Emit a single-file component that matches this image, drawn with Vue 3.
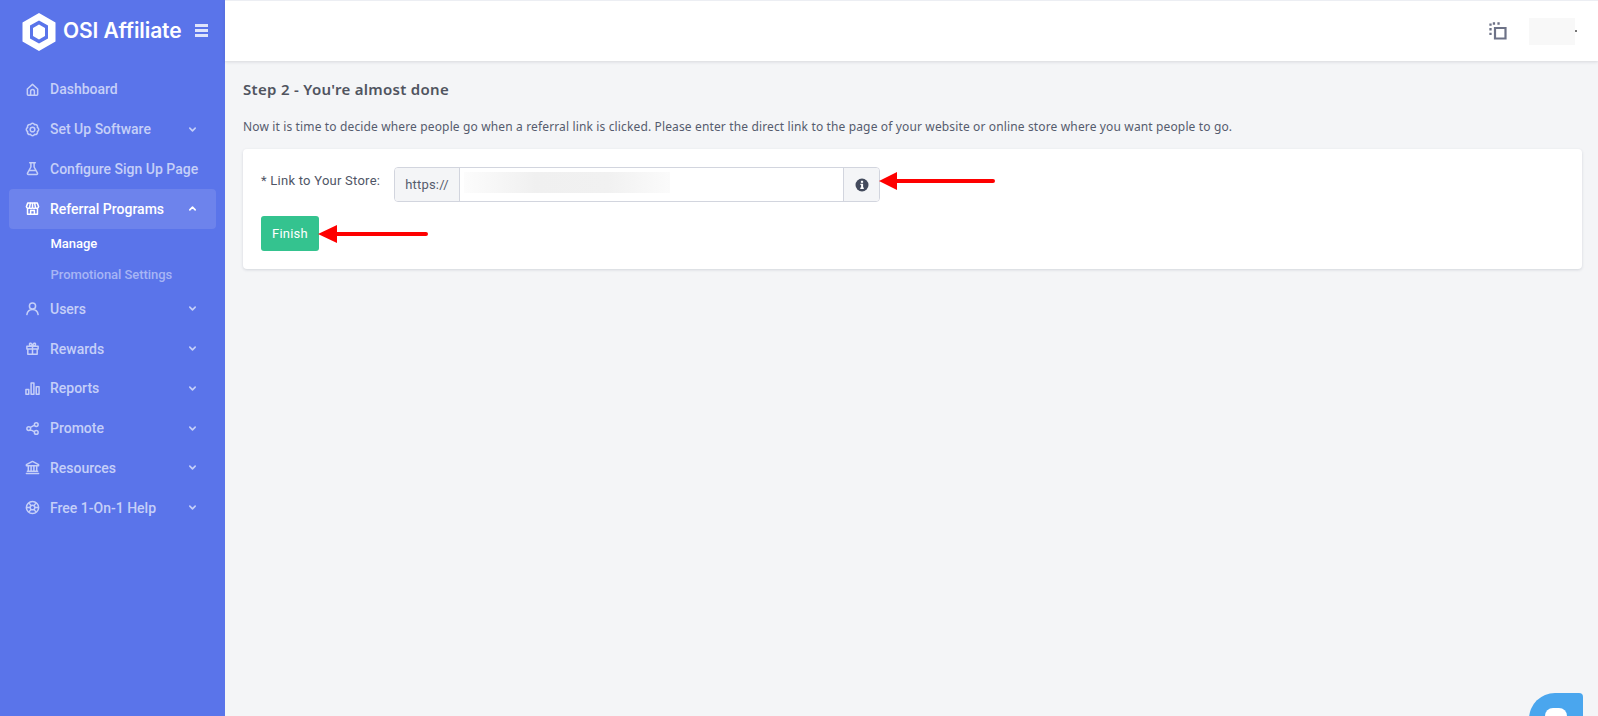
<script setup>
const stroke = { fill: 'none', stroke: 'currentColor', 'stroke-width': 1.6, 'stroke-linecap': 'round', 'stroke-linejoin': 'round' }
const items = [
  { label: 'Dashboard', icon: 'home' },
  { label: 'Set Up Software', icon: 'gear', chev: 'down' },
  { label: 'Configure Sign Up Page', icon: 'flask' },
  { label: 'Referral Programs', icon: 'store', chev: 'up', active: true, subs: ['Manage', 'Promotional Settings'] },
  { label: 'Users', icon: 'user', chev: 'down' },
  { label: 'Rewards', icon: 'gift', chev: 'down' },
  { label: 'Reports', icon: 'bars', chev: 'down' },
  { label: 'Promote', icon: 'share', chev: 'down' },
  { label: 'Resources', icon: 'bank', chev: 'down' },
  { label: 'Free 1-On-1 Help', icon: 'help', chev: 'down' },
]
const icons = {
  home: 'M2.500 7.500 8 2.500l5.500 5v5.500a1 1 0 0 1-1 1h-9a1 1 0 0 1-1-1zM6 14v-4a2 2 0 0 1 4 0v4',
  gear: 'M13.170 5.860A2.300 2.300 0 0 1 13.170 10.140A2.300 2.300 0 0 1 10.140 13.170A2.300 2.300 0 0 1 5.860 13.170A2.300 2.300 0 0 1 2.830 10.140A2.300 2.300 0 0 1 2.830 5.860A2.300 2.300 0 0 1 5.860 2.830A2.300 2.300 0 0 1 10.140 2.830A2.300 2.300 0 0 1 13.170 5.860zM8 5.500a2.500 2.500 0 1 0 0 5 2.500 2.500 0 0 0 0-5z',
  flask: 'M5 1.800h6M6.300 1.800v4.600L2.700 13a.9.9 0 0 0 .8 1.300h9a.9.9 0 0 0 .8-1.300L9.700 6.400V1.800M4.800 10h6.400',
  store: 'M3 2h10l1.500 4a2 2 0 0 1-3.200 1.300A2.300 2.300 0 0 1 8 7.300a2.300 2.300 0 0 1-3.300 0A2 2 0 0 1 1.500 6zM5.800 2 4.800 7M8 2v5M10.200 2l1 5M2.700 8v6h10.600V8M6 14v-4h4v4',
  user: 'M8 2a3.300 3.300 0 1 0 0 6.600A3.300 3.300 0 0 0 8 2zM2 14.500c.5-3.500 3-5.500 6-5.500s5.500 2 6 5.500',
  gift: 'M2 5.500h12v3H2zM3 8.500V14h10V8.500M8 5.500V14M8 5.500C6 5.500 4.500 4.700 4.800 3.100 5.200 1.600 7.300 2 8 5.500zM8 5.500c2 0 3.500-.8 3.200-2.400C10.800 1.600 8.700 2 8 5.500z',
  bars: 'M1 9h3v5H1zM6.500 2h3v12h-3zM12 6h3v8h-3z',
  share: 'M5.800 6.800l4.400-2.500M5.800 9.200l4.400 2.500M4 6a2 2 0 1 0 0 4 2 2 0 0 0 0-4zM12 1.800a2 2 0 1 0 0 4 2 2 0 0 0 0-4zM12 10.200a2 2 0 1 0 0 4 2 2 0 0 0 0-4z',
  bank: 'M8 1.500 14.500 5v1h-13V5zM3.500 6.500v5M6.500 6.500v5M9.500 6.500v5M12.500 6.500v5M2.500 12h11M1.500 14.500h13',
  help: 'M8 1.500a6.500 6.500 0 1 0 0 13 6.500 6.500 0 0 0 0-13zM8 5.500a2.500 2.500 0 1 0 0 5 2.500 2.500 0 0 0 0-5zM4 3 6.500 6M12 3 9.500 6M4 13l2.500-3M12 13l-2.500-3M1.500 8h4M10.500 8h4',
}
</script>

<template>
  <div class="app">
    <aside class="side">
      <div class="brand">
        <svg class="logo" viewBox="0 0 34 38" width="34" height="38">
          <path fill="#fff" fill-rule="evenodd" d="M17 0 33.500 9.500v19L17 38 .5 28.500v-19zM17 7.500 8 12.500v13l9 5 9-5v-13z" />
          <path fill="#fff" d="M17 11.500 23 15v8l-6 3.500L11 23v-8z" />
        </svg>
        <span class="brand-name">OSI Affiliate</span>
        <span class="burger"><i></i><i></i><i></i></span>
      </div>
      <nav class="nav">
        <template v-for="it in items" :key="it.label">
          <div class="row" :class="{ active: it.active }">
            <svg class="ico" viewBox="0 0 16 16" width="15" height="15" v-bind="stroke"><path :d="icons[it.icon]" /></svg>
            <span class="label">{{ it.label }}</span>
            <svg v-if="it.chev" class="chev" viewBox="0 0 10 10" width="9" height="9" fill="none" stroke="currentColor" stroke-width="1.800" stroke-linecap="round" stroke-linejoin="round">
              <path :d="it.chev === 'down' ? 'M2 3.500 5 6.500 8 3.500' : 'M2 6.500 5 3.500 8 6.500'" />
            </svg>
          </div>
          <div v-if="it.subs" class="subs">
            <div v-for="(s, i) in it.subs" :key="s" class="sub" :class="{ on: i === 0 }">{{ s }}</div>
          </div>
        </template>
      </nav>
    </aside>

    <div class="main">
      <header class="top">
        <svg class="focus" viewBox="0 0 18 18" width="18" height="18">
          <path fill="none" stroke="#6d7287" stroke-width="2.200" d="M6 6h10.500v10.500H6z" />
          <path fill="none" stroke="#6d7287" stroke-width="2.300" stroke-dasharray="2.300 2.300" d="M1.500 13V1.500H13" />
        </svg>
        <div class="avatar"></div>
        <span class="caret"></span>
      </header>

      <main class="content">
        <h1 class="title">Step 2 - You're almost done</h1>
        <p class="desc">Now it is time to decide where people go when a referral link is clicked. Please enter the direct link to the page of your website or online store where you want people to go.</p>

        <section class="card">
          <div class="field">
            <label class="flabel">* Link to Your Store:</label>
            <div class="group">
              <span class="prefix">https://</span>
              <div class="input"><div class="blur"></div></div>
              <span class="suffix">
                <svg viewBox="0 0 14 14" width="14" height="14">
                  <circle cx="7" cy="7" r="6.500" fill="#434a5c" />
                  <rect x="5.900" y="2.800" width="2.200" height="2" fill="#fff" />
                  <path fill="#fff" d="M5.400 5.800h2.700v3.800h.7v1.300H5.300V9.600h.8V7.100h-.7z" />
                </svg>
              </span>
              <svg class="arrow arrow-a" viewBox="0 0 116 20" width="116" height="20">
                <path fill="#fe0000" d="M0 10 18 1v7h96a2 2 0 0 1 0 4H18v7z" />
              </svg>
            </div>
          </div>
          <div class="actions">
            <button class="finish" type="button">Finish</button>
            <svg class="arrow arrow-b" viewBox="0 0 110 20" width="110" height="20">
              <path fill="#fe0000" d="M0 10 19 1v7h89a2 2 0 0 1 0 4H19v7z" />
            </svg>
          </div>
        </section>
      </main>
    </div>

    <div class="chat"><span class="chat-dot"></span></div>
  </div>
</template>

<style>
html, body { margin: 0; padding: 0; overflow: hidden; }
</style>

<style scoped>
.app {
  position: relative;
  display: flex;
  width: 1598px;
  height: 716px;
  overflow: hidden;
  background: #f4f5f7;
  font-family: "Roboto", "Liberation Sans", sans-serif;
  color: #4a5060;
}
.side {
  flex: 0 0 225px;
  width: 225px;
  min-width: 0;
  overflow: hidden;
  background: #5a74ea;
  display: flex;
  flex-direction: column;
}
.brand {
  height: 69.500px;
  padding: 13px 0 0 22px;
  box-sizing: border-box;
  display: flex;
  align-items: flex-start;
}
.logo { flex: none; }
.brand-name {
  margin-left: 7px;
  margin-top: 5px;
  font-family: "Inter", "Roboto", sans-serif;
  font-size: 21px;
  line-height: 26px;
  font-weight: 600;
  letter-spacing: -0.1px;
  color: #fff;
  white-space: nowrap;
}
.burger {
  flex: none;
  margin-left: 13px;
  margin-top: 11px;
  width: 13px;
  display: flex;
  flex-direction: column;
  gap: 2.500px;
}
.burger i { display: block; height: 2.500px; background: #dfe4fb; }
.nav { display: flex; flex-direction: column; padding: 0 9px; }
.row {
  height: 39.750px;
  padding: 0 19px 0 16px;
  display: flex;
  align-items: center;
  color: #c5cff8;
  font-size: 14px;
  font-weight: 500;
  border-radius: 4px;
}
.row.active { background: #6d83ec; color: #fff; }
.ico { flex: none; }
.label { margin-left: 10px; flex: 1; white-space: nowrap; }
.chev { flex: none; }
.subs { display: flex; flex-direction: column; padding: 0 0 0 41.500px; margin-top: -1px; margin-bottom: -0.500px; }
.sub { height: 31px; line-height: 31px; font-size: 13px; font-weight: 500; letter-spacing: -0.05px; color: #a7b5f5; }
.sub.on { color: #fff; }
.main { flex: 1; display: flex; flex-direction: column; min-width: 0; }
.top {
  height: 61px;
  flex: none;
  box-sizing: border-box;
  background: #fff;
  border-top: 1px solid #eceef3;
  box-shadow: 0 1px 3px rgba(60, 65, 90, 0.16);
  display: flex;
  align-items: center;
  padding: 0 21px 0 0;
  justify-content: flex-end;
}
.focus { margin-right: 22px; }
.avatar {
  width: 46px;
  height: 27px;
  background: #f8f8f8;
}
.caret { width: 2px; height: 2px; background: #777; }
.content { padding: 20px 16px 0 18px; }
.title {
  margin: 0;
  font-size: 15px;
  line-height: 17px;
  font-weight: 600;
  letter-spacing: 0.3px;
  color: #50545f;
  font-family: "Noto Sans", "Roboto", sans-serif;
}
.desc {
  margin: 20px 0 0;
  font-size: 12px;
  line-height: 18px;
  letter-spacing: 0.14px;
  color: #565c6e;
  font-family: "Noto Sans", "Roboto", sans-serif;
  white-space: nowrap;
}
.card {
  margin-top: 13px;
  height: 120px;
  box-sizing: border-box;
  padding: 18px 18px;
  background: #fff;
  border-radius: 4px;
  box-shadow: 0 1px 3px rgba(40, 50, 80, 0.16);
}
.field { display: flex; align-items: flex-start; }
.flabel {
  width: 133px;
  flex: none;
  padding-top: 6px;
  font-size: 13px;
  line-height: 16px;
  font-weight: 400;
  letter-spacing: 0.25px;
  color: #4f5566;
}
.group {
  position: relative;
  display: flex;
  width: 486px;
  height: 35px;
  box-sizing: border-box;
  border: 1px solid #d2d5de;
  border-radius: 4px;
}
.prefix {
  width: 65px;
  flex: none;
  box-sizing: border-box;
  display: flex;
  align-items: center;
  justify-content: center;
  background: #f4f5f7;
  border-right: 1px solid #d2d5de;
  border-radius: 3px 0 0 3px;
  font-size: 13px;
  letter-spacing: 0.2px;
  color: #565c6e;
}
.input { flex: 1; padding: 4px 0 0 4px; }
.blur {
  width: 206px;
  height: 21px;
  background: linear-gradient(90deg, #fcfcfc 0, #f0f0f0 35%, #f1f1f1 70%, #fbfbfb 100%);
}
.suffix {
  width: 36px;
  flex: none;
  box-sizing: border-box;
  display: flex;
  align-items: center;
  justify-content: center;
  background: #f4f5f7;
  border-left: 1px solid #d2d5de;
  border-radius: 0 3px 3px 0;
}
.arrow { position: absolute; }
.arrow-a { left: 100%; top: 3px; }
.actions { position: relative; margin-top: 14px; width: 58px; }
.finish {
  display: block;
  width: 58px;
  height: 35px;
  padding: 0;
  border: 0;
  border-radius: 3px;
  background: #34c38f;
  color: #fff;
  font-family: inherit;
  font-size: 13px;
  letter-spacing: 0.2px;
}
.arrow-b { left: 57px; top: 8px; }
.chat {
  position: absolute;
  left: 1529px;
  top: 693px;
  width: 54px;
  height: 54px;
  border-radius: 26px 4px 26px 26px;
  background: #4aa6ee;
}
.chat-dot {
  position: absolute;
  left: 16px;
  top: 15px;
  width: 22px;
  height: 20px;
  border-radius: 8px;
  background: #fff;
}
</style>
